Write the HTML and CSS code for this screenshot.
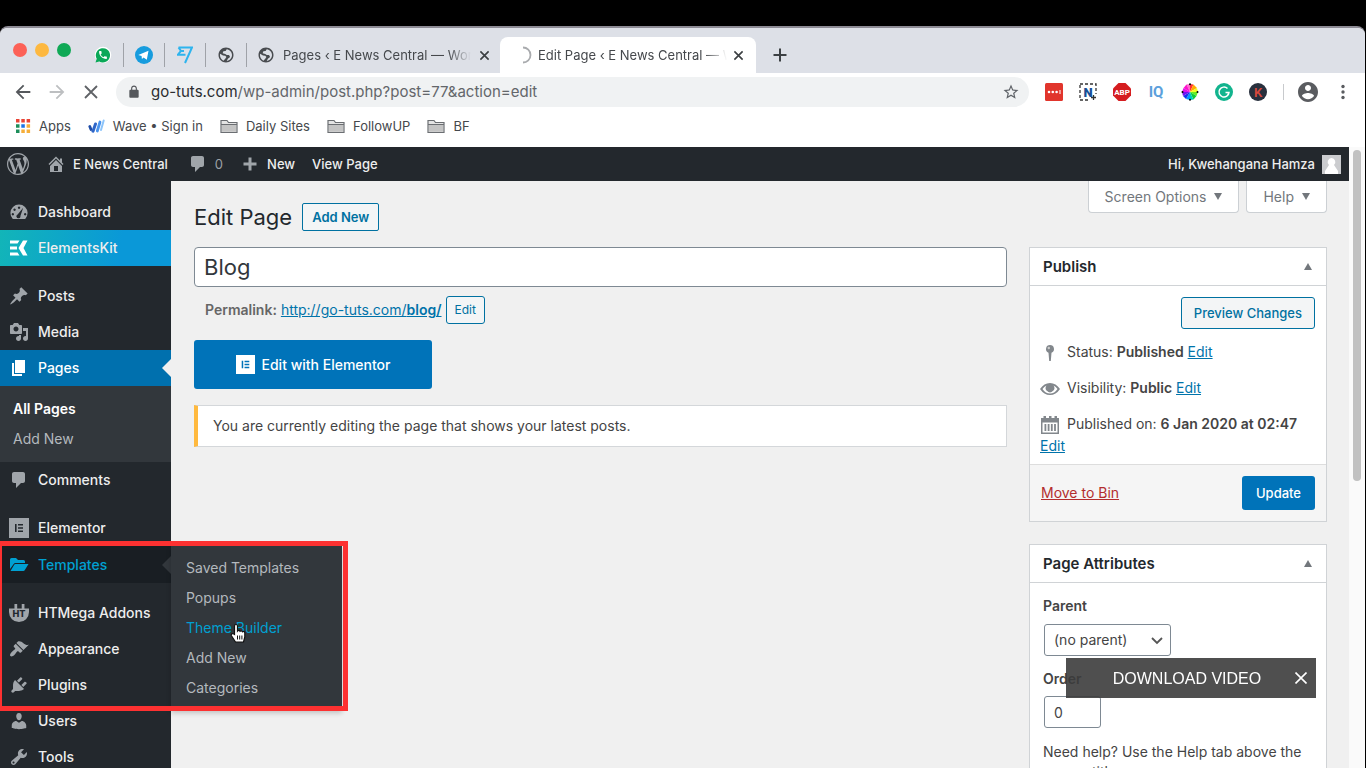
FILE: index.html
```html
<!DOCTYPE html>
<html lang="en">
<head>
<meta charset="utf-8">
<title>Edit Page ‹ E News Central — WordPress</title>
<link rel="stylesheet" href="styles.css">
</head>
<body>
<svg class="defs" aria-hidden="true">
  <symbol id="globe" viewBox="0 0 24 24"><path d="M12 2C6.480 2 2 6.480 2 12s4.480 10 10 10 10-4.480 10-10S17.520 2 12 2zM8.500 19.500C5.500 18 4 15.200 4 12l.2-1.800L8 12.500l3 .5 1.500 1.800-1.500 2.200zM13 20l1.500-3 3-2.500L16 12h-3l-2-1.500-3.500-1 1-2.500 3-.5 1.500-2.300C17 4.700 20 8 20 12c0 4-3 7.500-7 8z"/></symbol>
  <symbol id="close" viewBox="0 0 12 12"><path d="M1.500 1.500l9 9M10.500 1.500l-9 9" fill="none" stroke="currentColor" stroke-width="1.800"/></symbol>
  <symbol id="folder" viewBox="0 0 18 15"><path d="M1 13.500V1.500h6l1.500 2H17v10z" fill="#e4e4e4" stroke="#6b6e72" stroke-width="1.200"/><path d="M2 6h14v6.800H2z" fill="#c4c4c4"/><path d="M1 5.500h16" stroke="#6b6e72"/></symbol>
  <symbol id="comment" viewBox="0 0 20 20"><path d="M5 2h9c1.100 0 2 .9 2 2v7c0 1.100-.9 2-2 2h-2l-5 5v-5H5c-1.100 0-2-.9-2-2V4c0-1.100.9-2 2-2z"/></symbol>
  <symbol id="elementor" viewBox="0 0 20 20"><path fill-rule="evenodd" d="M0 0h20v20H0zM6 6v8h1.600V6zM9 6v1.600h5V6zM9 9.200v1.600h5V9.200zM9 12.400V14h5v-1.600z"/></symbol>
</svg>

<div class="browser">
  <div class="tabstrip">
    <div class="lights"><i class="red"></i><i class="amber"></i><i class="green"></i></div>
    <div class="pinned"><svg width="18" height="18" viewBox="0 0 24 24"><circle cx="12" cy="12" r="11" fill="#fff"/><path d="M2 22l1.600-5A9.500 9.500 0 1 1 7 20.500z" fill="#0aa858"/><path transform="translate(5 5) scale(.58)" fill="#fff" d="M6.620 10.790c1.440 2.830 3.760 5.140 6.590 6.590l2.200-2.200c.27-.27.67-.36 1.020-.24 1.120.37 2.330.57 3.570.57.55 0 1 .45 1 1V20c0 .55-.45 1-1 1-9.390 0-17-7.610-17-17 0-.55.45-1 1-1h3.500c.55 0 1 .45 1 1 0 1.250.2 2.450.57 3.570.11.35.03.74-.25 1.020z"/></svg></div>
    <div class="pinned"><svg width="18" height="18" viewBox="0 0 18 18"><circle cx="9" cy="9" r="9" fill="#179cde"/><path d="M3.300 9l10.200-4.200-1.700 9-3.200-2.200-1.700 1.500-.3-3z" fill="#fff"/></svg></div>
    <div class="pinned"><svg width="16" height="18" viewBox="0 0 16 18"><path d="M1.500 1.500H15L8 17M1.500 1.500L4 5 1 8.700h7.500M4 5h3" fill="none" stroke="#2eb4ee" stroke-width="2"/></svg></div>
    <div class="pinned"><svg class="dark" width="18" height="18"><use href="#globe"/></svg></div>
    <div class="tab">
      <svg class="dark" width="18" height="18"><use href="#globe"/></svg>
      <span class="tab-title">Pages ‹ E News Central — Wor</span>
      <button aria-label="Close tab"><svg width="11" height="11"><use href="#close"/></svg></button>
    </div>
    <div class="tab active">
      <svg width="18" height="18" viewBox="0 0 18 18"><path d="M9 1.500a7.500 7.500 0 0 1 0 15" fill="none" stroke="#a9abae" stroke-width="1.800"/></svg>
      <span class="tab-title">Edit Page ‹ E News Central — W</span>
      <button aria-label="Close tab"><svg width="11" height="11"><use href="#close"/></svg></button>
    </div>
    <button class="new-tab" aria-label="New tab"><svg width="14" height="14" viewBox="0 0 14 14"><path d="M7 .5v13M.5 7h13" stroke="currentColor" stroke-width="2"/></svg></button>
  </div>

  <div class="toolbar">
    <button aria-label="Back"><svg width="22" height="22" viewBox="0 0 24 24"><path fill="#55585c" d="M20 11H7.830l5.590-5.590L12 4l-8 8 8 8 1.410-1.410L7.830 13H20z"/></svg></button>
    <button aria-label="Forward"><svg width="22" height="22" viewBox="0 0 24 24"><path fill="#bdbfc1" d="M4 13h12.170l-5.590 5.590L12 20l8-8-8-8-1.410 1.410L16.170 11H4z"/></svg></button>
    <button aria-label="Stop"><svg width="14" height="14" viewBox="0 0 14 14"><path d="M1 1l12 12M13 1L1 13" stroke="#5f6266" stroke-width="1.800"/></svg></button>
    <div class="omnibox">
      <svg width="14" height="14" viewBox="0 0 24 24"><path fill="#55585c" d="M18 8h-1V6c0-2.760-2.240-5-5-5S7 3.240 7 6v2H6c-1.100 0-2 .9-2 2v10c0 1.100.9 2 2 2h12c1.100 0 2-.9 2-2V10c0-1.100-.9-2-2-2zM9 6c0-1.660 1.340-3 3-3s3 1.340 3 3v2H9z"/></svg>
      <span class="url"><b>go-tuts.com</b>/wp-admin/post.php?post=77&amp;action=edit</span>
      <svg width="18" height="18" viewBox="0 0 24 24"><path fill="#5f6368" d="M22 9.240l-7.190-.62L12 2 9.190 8.630 2 9.240l5.460 4.730L5.820 21 12 17.270 18.180 21l-1.630-7.030zM12 15.400l-3.760 2.270 1-4.280-3.320-2.880 4.380-.38L12 6.100l1.710 4.040 4.380.38-3.320 2.880 1 4.280z"/></svg>
    </div>
    <div class="extensions">
      <svg width="18" height="18" viewBox="0 0 18 18"><rect width="18" height="18" rx="1.500" fill="#e1352c"/><circle cx="4" cy="9" r="1.300" fill="#fff"/><circle cx="7.800" cy="9" r="1.300" fill="#fff"/><circle cx="11.600" cy="9" r="1.300" fill="#fff"/><path d="M15 7v4" stroke="#fff"/></svg>
      <svg width="18" height="18" viewBox="0 0 18 18"><rect x="1" y="1" width="16" height="16" fill="none" stroke="#333" stroke-width="1.300" stroke-dasharray="3 2"/><path d="M11 11h7v7h-7z" fill="#fff"/><path d="M14.500 12v5M12 14.500h5" stroke="#333" stroke-width="1.300"/><text x="9" y="13.500" text-anchor="middle" font-size="13" font-weight="900" fill="#174e96">N</text></svg>
      <svg width="18" height="18" viewBox="0 0 18 18"><path d="M5.500 0h7L18 5.500v7L12.500 18h-7L0 12.500v-7z" fill="#d51d20"/><text x="9" y="12" text-anchor="middle" font-size="8" font-weight="700" fill="#fff">ABP</text></svg>
      <svg width="18" height="18" viewBox="0 0 18 18"><text x="9" y="14" text-anchor="middle" font-size="15" font-weight="700" fill="#5ba0dc">IQ</text></svg>
      <svg width="18" height="18" viewBox="0 0 18 18"><path d="M9 9L5.500 1.500 9 1z" fill="#f6c"/><path d="M9 9V1l3.500.5z" fill="#f33"/><path d="M9 9l3.500-7.500L16 5z" fill="#fa0"/><path d="M9 9l7-4 1 4z" fill="#ef2"/><path d="M9 9h8l-1.500 4z" fill="#6e2"/><path d="M9 9l6.500 4-3 3.500z" fill="#1c3"/><path d="M9 9l3.500 7.500L9 17z" fill="#0cb"/><path d="M9 9v8l-4-1z" fill="#09f"/><path d="M9 9l-4 7-3-3z" fill="#13e"/><path d="M9 9l-7 4-1-4z" fill="#71e"/><path d="M9 9H1l1.500-4z" fill="#d1e"/><path d="M9 9L2.500 5l3-3.500z" fill="#f1c"/><circle cx="9" cy="1.300" r="1"/><circle cx="1.500" cy="9" r="1"/><circle cx="16.500" cy="9" r="1"/><circle cx="9" cy="16.700" r="1"/></svg>
      <svg width="18" height="18" viewBox="0 0 18 18"><circle cx="9" cy="9" r="9" fill="#12b48e"/><path d="M12.500 5.500A5 5 0 1 0 14 9.500h-3.500M14 9.500l-1.500 3" fill="none" stroke="#fff" stroke-width="1.500"/></svg>
      <svg width="18" height="18" viewBox="0 0 18 18"><circle cx="9" cy="9" r="9" fill="#28303d"/><text x="9" y="13.500" text-anchor="middle" font-size="13" font-weight="600" fill="#d8483c">K</text></svg>
      <i class="divider"></i>
      <svg width="24" height="24" viewBox="0 0 24 24"><path fill="#5a5c60" d="M12 2C6.480 2 2 6.480 2 12s4.480 10 10 10 10-4.480 10-10S17.520 2 12 2zm0 3c1.660 0 3 1.340 3 3s-1.340 3-3 3-3-1.340-3-3 1.340-3 3-3zm0 14.200c-2.500 0-4.710-1.280-6-3.220.03-1.990 4-3.080 6-3.080 1.990 0 5.970 1.090 6 3.080-1.290 1.940-3.500 3.220-6 3.220z"/></svg>
      <svg width="14" height="18" viewBox="0 0 14 18"><g fill="#5a5c60"><circle cx="7" cy="3.500" r="1.700"/><circle cx="7" cy="9" r="1.700"/><circle cx="7" cy="14.500" r="1.700"/></g></svg>
    </div>
  </div>

  <nav class="bookmarks" aria-label="Bookmarks">
    <a href="#"><svg class="apps" width="16" height="16" viewBox="0 0 16 16"><g fill="#e94335"><path d="M1 1h3.500v3.500H1zM6.300 1h3.500v3.500H6.300zM11.600 1h3.500v3.500h-3.500z"/></g><path fill="#1d8e5a" d="M1 6.300h3.500v3.500H1zM1 11.600h3.500v3.500H1z"/><path fill="#1a73e8" d="M6.300 6.300h3.500v3.500H6.300z"/><path fill="#f6ae3a" d="M11.600 6.300h3.500v3.500h-3.500zM6.300 11.600h3.500v3.500H6.300zM11.600 11.600h3.500v3.500h-3.500z"/></svg>Apps</a>
    <a href="#"><svg width="17" height="14" viewBox="0 0 17 14"><path d="M1.800 7.500l1.200 3" stroke="#1f4da8" stroke-width="2.800" stroke-linecap="round"/><path d="M5 12.200L7.500 5" stroke="#2f66c8" stroke-width="3" stroke-linecap="round"/><path d="M9.300 12L12 3" stroke="#4a94ee" stroke-width="2.800" stroke-linecap="round"/><path d="M13 11l2.700-9.500" stroke="#8cc4fa" stroke-width="2" stroke-linecap="round"/></svg>Wave • Sign in</a>
    <a href="#"><svg width="18" height="15"><use href="#folder"/></svg>Daily Sites</a>
    <a href="#"><svg width="18" height="15"><use href="#folder"/></svg>FollowUP</a>
    <a href="#"><svg width="18" height="15"><use href="#folder"/></svg>BF</a>
  </nav>

  <div class="viewport">
    <div class="wp">
      <header class="adminbar">
        <svg width="22" height="22" viewBox="0 0 20 20"><path d="M20 10c0-5.510-4.490-10-10-10C4.480 0 0 4.490 0 10c0 5.520 4.480 10 10 10 5.510 0 10-4.480 10-10zM7.780 15.370L4.370 6.220c.55-.02 1.170-.08 1.170-.08.5-.06.44-1.130-.06-1.110 0 0-1.450.11-2.370.11-.18 0-.37 0-.58-.01C4.120 2.690 6.870 1.110 10 1.110c2.330 0 4.450.87 6.050 2.340-.68-.11-1.650.39-1.650 1.580 0 .74.45 1.360.9 2.100.35.61.55 1.360.55 2.460 0 1.490-1.400 5-1.400 5l-3.030-8.370c.54-.02.82-.17.82-.17.5-.05.44-1.250-.06-1.220 0 0-1.440.12-2.380.12-.87 0-2.330-.12-2.330-.12-.5-.03-.56 1.200-.06 1.220l.92.08 1.260 3.410zM17.410 10c.24-.64.74-1.870.43-4.250.7 1.290 1.050 2.710 1.050 4.250 0 3.290-1.730 6.240-4.400 7.780.97-2.590 1.940-5.200 2.920-7.780zM6.100 18.090C3.120 16.650 1.110 13.530 1.110 10c0-1.300.23-2.480.72-3.590C3.250 10.300 4.670 14.200 6.100 18.090zm4.030-6.630l2.580 6.980c-.86.29-1.760.45-2.710.45-.79 0-1.570-.11-2.290-.33.81-2.380 1.620-4.740 2.420-7.100z"/></svg>
        <a href="#"><svg width="20" height="20" viewBox="0 0 20 20"><path d="M16 8.500l1.530 1.530-1.060 1.060L10 4.600l-6.470 6.490-1.060-1.060L10 2.500l4 4v-2h2v4zm-6-2.460l6 5.990V18H4v-5.970zM12 17v-5H8v5h4z"/></svg>E News Central</a>
        <a href="#" class="count"><svg width="20" height="20"><use href="#comment"/></svg>0</a>
        <a href="#"><svg width="20" height="20" viewBox="0 0 20 20"><path d="M8.500 3.500h3v5h5v3h-5v5h-3v-5h-5v-3h5z"/></svg>New</a>
        <a href="#">View Page</a>
        <a href="#" class="account">Hi, Kwehangana Hamza <svg width="19" height="19" viewBox="0 0 19 19"><path fill="#cbcccf" d="M0 0h19v19H0z"/><path fill="#fff" d="M9.500 3a4 4 0 0 1 2.500 7l4 6v3H3v-3l4-6a4 4 0 0 1 2.500-7z"/></svg></a>
      </header>

      <div class="wp-body">
        <nav class="menu" aria-label="Main menu">
          <ul>
            <li><a href="#"><svg viewBox="0 0 20 20"><path fill-rule="evenodd" d="M3.800 17A8.600 8.600 0 1 1 16.200 17zM10 4.500a1.200 1.200 0 1 0 .1 0zM5.500 6.500a1.200 1.200 0 1 0 .1 0zM3.800 11a1.200 1.200 0 1 0 .1 0zM16.100 11a1.200 1.200 0 1 0 .1 0zM14.200 5.800L8.600 12.500a2 2 0 1 0 2.800 1.500z"/></svg>Dashboard</a></li>
            <li class="kit"><a href="#"><svg viewBox="0 0 20 20"><path d="M1 2.500h9.500l-2 3H1zM1 8.500h7v3H1zM1 14.500h7.500l2 3H1zM14 2.500h4.500L14.500 10l4 7.500H14L9.500 10z"/></svg>ElementsKit</a></li>
            <li class="gap"><a href="#"><svg viewBox="0 0 20 20"><path d="M10.440 3.020l1.820-1.820 6.360 6.350-1.830 1.820c-1.050-.68-2.480-.57-3.410.36l-.75.75c-.92.93-1.040 2.350-.35 3.410l-1.830 1.820-2.410-2.410-2.800 2.790c-.42.42-3.380 2.710-3.800 2.290s1.860-3.390 2.280-3.810l2.790-2.790L4.100 9.360l1.830-1.820c1.050.69 2.480.57 3.400-.36l.75-.75c.93-.92 1.050-2.350.36-3.410z"/></svg>Posts</a></li>
            <li><a href="#"><svg viewBox="0 0 20 20"><path d="M13 11V4c0-.55-.45-1-1-1h-1.670L9 1H5L3.670 3H2c-.55 0-1 .45-1 1v7c0 .55.45 1 1 1h10c.55 0 1-.45 1-1zM7 4.500c1.380 0 2.500 1.120 2.500 2.500S8.380 9.500 7 9.500 4.500 8.380 4.500 7 5.620 4.500 7 4.500zM14 6h5v10.500c0 1.380-1.120 2.500-2.500 2.500S14 17.880 14 16.500s1.120-2.500 2.500-2.500c.17 0 .34.02.5.05V9h-3zm-4 8.050V13h2v3.500c0 1.380-1.120 2.500-2.500 2.500S7 17.880 7 16.500 8.120 14 9.500 14c.17 0 .34.02.5.05z"/></svg>Media</a></li>
            <li class="current"><a href="#"><svg viewBox="0 0 20 20"><path d="M6 15V2h10v13H6zm-1 1h8v2H3V5h2v11z"/></svg>Pages</a>
              <ul class="submenu"><li><a href="#" class="on">All Pages</a></li><li><a href="#">Add New</a></li></ul>
            </li>
            <li><a href="#"><svg viewBox="0 0 20 20"><use href="#comment"/></svg>Comments</a></li>
            <li class="gap"><a href="#"><svg viewBox="0 0 20 20"><use href="#elementor"/></svg>Elementor</a></li>
            <li class="open"><a href="#"><svg viewBox="0 0 20 20"><path d="M1 14V4.500A1.500 1.500 0 0 1 2.500 3H7l2 2h5.500A1.500 1.500 0 0 1 16 6.500V8H6.500a2 2 0 0 0-1.800 1.100zM1.500 16L5.200 9.800A1.500 1.500 0 0 1 6.500 9H19.500l-3.800 6.300a1.500 1.500 0 0 1-1.300.7z"/></svg>Templates</a>
              <ul class="flyout">
                <li><a href="#">Saved Templates</a></li>
                <li><a href="#">Popups</a></li>
                <li><a href="#" class="hover">Theme Builder</a></li>
                <li><a href="#">Add New</a></li>
                <li><a href="#">Categories</a></li>
              </ul>
              <div class="highlight"></div>
              <svg class="cursor" viewBox="0 0 16 20"><path d="M4.500 11.500V3a1.500 1.500 0 0 1 3 0v5a1.500 1.500 0 0 1 2.500.3 1.500 1.500 0 0 1 2.500.5 1.400 1.400 0 0 1 2.300 1.200v4L13.500 19h-8L1.300 12.500a1.400 1.400 0 0 1 2-1.700z" fill="#fff" stroke="#111" stroke-width="1.200"/><path d="M7.500 12.500v4M9.700 12.500v4M11.900 12.500v4" stroke="#111"/></svg>
            </li>
            <li class="gap"><a href="#"><svg viewBox="0 0 22 22"><path d="M6 1h3v5h5V1h3v5h5v4a11 11 0 0 1-22 0V6h6z"/><text x="11" y="15" text-anchor="middle" font-size="10" font-weight="800" fill="#23282d">HT</text></svg>HTMega Addons</a></li>
            <li><a href="#"><svg viewBox="0 0 20 20"><path d="M14.480 11.060L7.410 3.990l1.500-1.500c.5-.56 2.300-.47 3.510.32 1.210.8 1.430 1.280 2.910 2.100 1.180.64 2.450 1.260 4.450.85zm-.71.71L6.700 4.700 4.930 6.470c-.39.39-.39 1.020 0 1.410l1.060 1.060c.39.39.39 1.030 0 1.420-.6.6-1.430 1.110-2.210 1.690-.35.26-.7.53-1.010.84C1.430 14.230.4 16.080 1.400 17.070c.99 1 2.840-.03 4.180-1.360.31-.31.58-.66.85-1.020.57-.78 1.080-1.610 1.690-2.210.39-.39 1.020-.39 1.410 0l1.060 1.060c.39.39 1.020.39 1.410 0z"/></svg>Appearance</a></li>
            <li><a href="#"><svg viewBox="0 0 20 20"><path d="M13.110 4.360L9.870 7.600 8 5.730l3.240-3.240c.35-.34 1.050-.2 1.560.32.52.51.66 1.210.31 1.550zm-8 1.770l.91-1.120 9.010 9.010-1.190.84c-.71.71-2.630 1.160-3.820 1.160H6.140L4.900 17.260c-.59.59-1.540.59-2.120 0-.59-.58-.59-1.530 0-2.120l1.240-1.240v-3.880c0-1.130.4-3.190 1.090-3.890zm7.260 3.970l3.240-3.240c.34-.35 1.040-.21 1.550.31.52.51.66 1.210.31 1.550l-3.240 3.250z"/></svg>Plugins</a></li>
            <li><a href="#"><svg viewBox="0 0 20 20"><path d="M10 9.250c-2.270 0-2.730-3.440-2.730-3.440C7 4.020 7.820 2 9.970 2c2.160 0 2.980 2.020 2.710 3.810 0 0-.41 3.440-2.680 3.440zm0 2.570L12.720 10c2.390 0 4.520 2.330 4.520 4.530v2.490s-3.650 1.130-7.240 1.130c-3.650 0-7.240-1.130-7.240-1.130v-2.490c0-2.250 1.940-4.480 4.470-4.480z"/></svg>Users</a></li>
            <li><a href="#"><svg viewBox="0 0 20 20"><path d="M16.680 9.770c-1.340 1.340-3.300 1.670-4.950.99l-5.410 6.520c-.99.99-2.590.99-3.580 0s-.99-2.590 0-3.570l6.520-5.420c-.68-1.650-.35-3.610.99-4.950 1.280-1.280 3.120-1.620 4.720-1.060l-2.890 2.890 2.820 2.820 2.860-2.870c.53 1.580.18 3.390-1.080 4.650zM3.810 16.210c.4.39 1.040.39 1.430 0 .4-.4.4-1.040 0-1.430-.39-.4-1.030-.4-1.430 0-.39.39-.39 1.030 0 1.430z"/></svg>Tools</a></li>
          </ul>
        </nav>

        <main class="content">
          <div class="page-head">
            <h1>Edit Page</h1>
            <button class="btn strong">Add New</button>
            <div class="screen-meta"><button>Screen Options<i class="down"></i></button><button>Help<i class="down"></i></button></div>
          </div>
          <div class="columns">
            <div class="primary">
              <input class="title" type="text" value="Blog" aria-label="Title">
              <div class="permalink"><strong>Permalink:</strong> <a href="#">http://go-tuts.com/<b>blog/</b></a> <button class="btn small">Edit</button></div>
              <button class="btn-elementor"><svg width="19" height="19"><use href="#elementor"/></svg>Edit with Elementor</button>
              <p class="notice">You are currently editing the page that shows your latest posts.</p>
            </div>

            <aside class="side">
              <section class="box">
                <h2>Publish<i class="up"></i></h2>
                <div class="preview"><button class="btn">Preview Changes</button></div>
                <ul class="facts">
                  <li><svg width="20" height="18" viewBox="0 0 20 18"><path d="M10 1a4 4 0 0 1 1.500 7.700L10.800 17H9.200l-.7-8.300A4 4 0 0 1 10 1z"/><circle cx="8.800" cy="4" r="1.200" fill="#ccc"/></svg>Status: <b>Published</b> <a href="#">Edit</a></li>
                  <li><svg width="20" height="18" viewBox="0 0 20 18"><path fill-rule="evenodd" d="M0 9q4-6 10-6t10 6q-4 6-10 6T0 9zM2.500 9q3 4.500 7.500 4.500T17.500 9q-1.500-2.500-4-3.600a4.300 4.300 0 1 1-7 0Q4 6.500 2.500 9z"/><circle cx="10" cy="8" r="3.600"/></svg>Visibility: <b>Public</b> <a href="#">Edit</a></li>
                  <li><svg width="20" height="18" viewBox="0 0 20 18"><path fill-rule="evenodd" d="M1 2h2.500V0H6v2h3V0h2.500v2h3V0H17v2h2v16H1zM2.500 6.500v10h15v-10zM4.500 8h1.800v7H4.500zM7.700 8h1.800v7H7.700zM10.900 8h1.800v7h-1.800zM14.100 8h1.800v7h-1.800z"/></svg>Published on: <b>6 Jan 2020 at 02:47</b> <a href="#">Edit</a></li>
                </ul>
                <div class="actions"><a href="#">Move to Bin</a><button>Update</button></div>
              </section>

              <section class="box">
                <h2>Page Attributes<i class="up"></i></h2>
                <div class="attributes">
                  <label for="parent">Parent</label>
                  <div class="select"><select id="parent"><option>(no parent)</option></select><svg width="12" height="8" viewBox="0 0 12 8"><path d="M1 1l5 5 5-5" fill="none" stroke="#555" stroke-width="1.800"/></svg></div>
                  <label for="order">Order</label>
                  <input id="order" type="text" value="0">
                  <p>Need help? Use the Help tab above the screen title.</p>
                </div>
              </section>
            </aside>
          </div>
        </main>
      </div>
    </div>
    <div class="scrollbar"><i></i></div>
  </div>
</div>

<div class="download"><button class="dl">DOWNLOAD VIDEO</button><button class="dismiss" aria-label="Close"><svg width="12" height="12" viewBox="0 0 12 12"><path d="M.5 .5l11 11M11.500 .5l-11 11" stroke="#fff" stroke-width="1.600"/></svg></button></div>
</body>
</html>
```
FILE: styles.css
```css
* { box-sizing: border-box; }
body {
  margin: 0;
  height: 100vh;
  padding: 26px 1px 0 0;
  overflow: hidden;
  background: #000;
  font: 14px/20px Inter, "Liberation Sans", sans-serif;
  color: #444;
}
ul { list-style: none; margin: 0; padding: 0; }
button, input, select { font: inherit; color: inherit; }
button { border: 0; background: none; padding: 0; cursor: pointer; }
a { color: #0073aa; }
svg { flex: none; }
.defs { position: absolute; width: 0; height: 0; }

.browser {
  display: flex;
  flex-direction: column;
  height: 100%;
  border-top: 2px solid #8d8b95;
  border-radius: 8px 8px 0 0;
  overflow: hidden;
  background: #fff;
}

/* Tab strip */
.tabstrip {
  display: flex;
  align-items: flex-end;
  height: 45px;
  background: #dde0e7;
  font-size: 13px;
}
.lights { display: flex; gap: 8px; width: 83px; padding-left: 13px; height: 28px; align-self: flex-start; margin-top: 15px; }
.lights i { width: 14px; height: 14px; border-radius: 50%; }
.red { background: #fc6157; }
.amber { background: #fdb840; }
.green { background: #0fa956; }
.dark { fill: #494c50; }
.pinned {
  display: flex;
  align-items: center;
  justify-content: center;
  width: 41px;
  height: 24px;
  margin-bottom: 6px;
  border-right: 1px solid #9fa2a8;
}
.tab { display: flex; align-items: center; gap: 8px; width: 253px; height: 36px; padding: 0 10px; }
.tab-title {
  flex: 1;
  overflow: hidden;
  white-space: nowrap;
  color: #45484c;
  -webkit-mask-image: linear-gradient(90deg, #000 88%, transparent);
  mask-image: linear-gradient(90deg, #000 88%, transparent);
}
.tab button, .new-tab { display: flex; color: #3c4043; }
.tab.active { gap: 6px; width: 256px; padding: 0 12px 0 14px; background: #fff; border-radius: 8px 8px 0 0; }
.new-tab { align-items: center; height: 36px; margin-left: 17px; }

/* Toolbar */
.toolbar { display: flex; align-items: center; height: 38px; padding: 0 15px 0 12px; gap: 12px; }
.toolbar > button { display: flex; align-items: center; justify-content: center; width: 22px; }
.omnibox {
  display: flex;
  align-items: center;
  flex: 1;
  height: 30px;
  margin-left: 2px;
  padding: 0 9px 0 11px;
  gap: 10px;
  border-radius: 15px;
  background: #f0f2f3;
}
.url { flex: 1; font-size: 15px; color: #63666a; }
.url b { font-weight: 400; color: #2a2c2f; }
.extensions { display: flex; align-items: center; gap: 16px; margin-left: 4px; }
.extensions svg { font-family: Roboto, sans-serif; }
.divider { width: 1px; height: 16px; background: #c8cacd; margin-right: -4px; }

.bookmarks { display: flex; align-items: center; gap: 17px; height: 36px; padding: 0 15px 6px; font-size: 13px; }
.bookmarks a { display: flex; align-items: center; gap: 8px; color: #45484c; text-decoration: none; }

/* Page viewport */
.viewport { display: flex; flex: 1; min-height: 0; background: #f0f0f0; }
.wp { flex: 1; min-width: 0; }
.scrollbar { width: 16px; padding: 3px 4px; background: #fafafa; }
.scrollbar i { display: block; height: 331px; border-radius: 4px; background: #c1c1c1; }

.adminbar {
  display: flex;
  align-items: center;
  gap: 17px;
  height: 34px;
  padding: 0 8px 0 7px;
  background: #23282d;
  font-size: 13px;
  font-weight: 500;
}
.adminbar svg, .menu svg { fill: #a0a5aa; }
.adminbar a { display: flex; align-items: center; gap: 7px; color: #eee; text-decoration: none; }
.adminbar .count { margin-left: 3px; color: #9ca1a6; font-weight: 400; }
.adminbar .account { margin-left: auto; }

.wp-body { display: flex; height: calc(100vh - 181px); }
.menu { flex: none; width: 171px; padding-top: 13px; background: #23282d; font-weight: 500; }
.menu a {
  display: flex;
  align-items: center;
  height: 36px;
  padding-left: 9px;
  gap: 9px;
  color: #eee;
  text-decoration: none;
}
.menu svg { width: 20px; height: 20px; }
.menu li { position: relative; }
.menu .gap { margin-top: 12px; }
.menu .kit { background: linear-gradient(100deg, #12b5b8, #0a98d8 70%); }
.menu .kit svg, .menu .current > a svg { fill: #fff; }
.menu .current > a { background: #0070ae; color: #fff; }
.menu .current > a::after, .menu .open > a::after {
  content: "";
  margin-left: auto;
  border: 9px solid transparent;
  border-left-width: 0;
  border-right-color: #f0f0f0;
}
.submenu, .flyout { background: #32373c; font-weight: 400; }
.submenu { padding: 8px 0; }
.submenu a, .flyout a { height: 30px; padding-left: 13px; color: #b4b9be; }
.submenu .on { color: #fff; font-weight: 600; }
.menu .open > a { background: #191e23; color: #00a0d2; height: 37px; }
.menu .open > a::after { border-right-color: #32373c; }
.menu .open > a svg { fill: #00a0d2; }
.flyout {
  position: absolute;
  z-index: 1;
  top: 0;
  left: 100%;
  width: 171px;
  padding: 7px 0;
  box-shadow: 0 3px 5px rgba(0, 0, 0, .2);
}
.flyout a { padding-left: 15px; }
.flyout .hover { color: #00a0d2; }
.highlight {
  position: absolute;
  z-index: 2;
  top: -5px;
  left: -3px;
  width: 351px;
  height: 170px;
  border: 5px solid #fd3131;
}
.menu .cursor { position: absolute; z-index: 3; top: 77px; left: 230px; width: 16px; height: 20px; }

/* Editor */
.content { flex: 1; min-width: 0; padding: 0 22px 0 23px; overflow: hidden; }
.page-head { display: flex; align-items: center; gap: 10px; height: 66px; }
h1 { margin: 6px 0 0; font-size: 22px; line-height: 30px; font-weight: 400; color: #23282d; }
.btn {
  height: 32px;
  padding: 0 12px;
  border: 1px solid #0071a1;
  border-radius: 3px;
  background: #f3f5f6;
  color: #0071a1;
  font-size: 13px;
  font-weight: 500;
}
.btn.strong { height: 28px; margin-top: 6px; padding: 0 9px; border-radius: 2px; font-weight: 600; }
.btn.small { height: 28px; padding: 0 8px; font-size: 12px; font-weight: 400; }
.screen-meta { display: flex; align-self: flex-start; gap: 7px; margin-left: auto; }
.screen-meta button {
  display: flex;
  align-items: center;
  gap: 8px;
  height: 32px;
  padding: 0 16px;
  border: 1px solid #ccd0d4;
  border-top: 0;
  border-radius: 0 0 4px 4px;
  background: #fff;
  color: #72777c;
}
.down, .up { border: 4px solid transparent; }
.down { border-top: 7px solid #72777c; border-bottom: 0; }
.up { border-bottom: 7px solid #72777c; border-top: 0; }

.columns { display: grid; grid-template-columns: minmax(0, 1fr) 298px; gap: 22px; align-items: start; }
.title {
  display: block;
  width: 100%;
  height: 40px;
  padding: 0 9px;
  border: 1px solid #7e8993;
  border-radius: 4px;
  background: #fff;
  color: #32373c;
  font-size: 22px;
}
.permalink { display: flex; align-items: center; gap: 4px; padding: 9px 11px 0; }
.permalink strong { font-weight: 600; color: #666; }
.permalink b { font-weight: 600; }
.btn-elementor {
  display: flex;
  align-items: center;
  justify-content: center;
  gap: 7px;
  width: 238px;
  height: 49px;
  margin-top: 16px;
  border-radius: 3px;
  background: #0073b9;
  color: #fff;
  font-weight: 500;
}
.btn-elementor svg { fill: #fff; }
.notice {
  margin: 16px 0 0;
  padding: 10px 15px;
  border: 1px solid #d4d7da;
  border-left: 4px solid #ffb93e;
  background: #fff;
}

.side { display: grid; gap: 22px; }
.box { border: 1px solid #d0d3d6; background: #fff; }
.box h2 {
  display: flex;
  align-items: center;
  justify-content: space-between;
  height: 38px;
  margin: 0;
  padding: 0 14px 0 13px;
  border-bottom: 1px solid #d0d3d6;
  font-size: 15px;
  font-weight: 600;
  color: #23282d;
}
.preview { display: flex; justify-content: flex-end; padding: 11px 11px 0; }
.facts { padding: 5px 11px 0 10px; }
.facts li { padding: 7px 0; line-height: 22px; }
.facts svg { margin-right: 7px; vertical-align: middle; fill: #82878c; }
.facts b { font-weight: 600; }
.actions {
  display: flex;
  align-items: center;
  justify-content: space-between;
  height: 57px;
  padding: 0 11px;
  border-top: 1px solid #ddd;
  background: #f5f5f5;
}
.actions a { color: #b32d2e; }
.actions button { height: 34px; padding: 0 14px; border-radius: 3px; background: #0073b9; color: #fff; font-size: 13px; font-weight: 500; }
.attributes { padding: 13px; }
.attributes label { display: block; font-weight: 600; }
.select { position: relative; width: 127px; margin: 8px 0 13px 1px; }
.select select, #order { height: 32px; border: 1px solid #7e8993; border-radius: 3px; background: #fff; padding: 0 9px; }
.select select { display: block; width: 100%; appearance: none; }
.select svg { position: absolute; right: 8px; top: 13px; pointer-events: none; }
#order { width: 57px; margin: 7px 0 0 1px; display: block; }
.attributes p { margin: 14px 0 0; }

/* Video download bar */
.download {
  position: fixed;
  z-index: 5;
  right: 50px;
  bottom: 70px;
  display: flex;
  align-items: center;
  width: 250px;
  height: 40px;
  background: rgba(60, 60, 60, .9);
  color: #fff;
  font: 16px "Liberation Sans", sans-serif;
}
.dl { flex: 1; padding: 2px 0 0 22px; }
.dismiss { display: flex; padding: 9px; }
```
